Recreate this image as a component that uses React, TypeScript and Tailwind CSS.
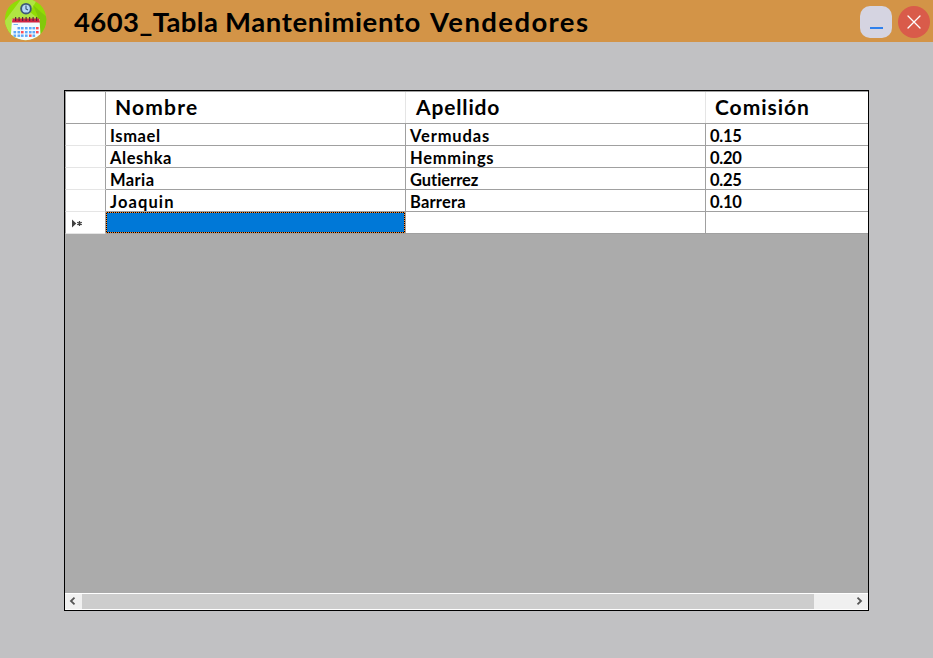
const rows = [
  { first: "Ismael", last: "Vermudas", rate: "0.15", firstCls: "tracking-[0.6px]", lastCls: "tracking-[0.85px]" },
  { first: "Aleshka", last: "Hemmings", rate: "0.20", firstCls: "tracking-[0.55px]", lastCls: "tracking-[0.75px]" },
  { first: "Maria", last: "Gutierrez", rate: "0.25", firstCls: "tracking-[0.4px]", lastCls: "tracking-[-0.05px]" },
  { first: "Joaquin", last: "Barrera", rate: "0.10", firstCls: "tracking-[1.1px]", lastCls: "tracking-[0.2px]" },
];

function CalendarLogo() {
  const cells: [number, number, string][] = [];
  [27, 31, 34.5].forEach((y, r) => {
    [13.5, 17.5, 21, 25, 29, 32.5, 36].forEach((x, c) => {
      if ((r === 0 && c === 0) || (r === 2 && c > 5)) return;
      const red = (r === 0 && c === 6) || (r === 1 && c === 2) || (r === 2 && c === 4) || (r === 1 && c === 6);
      cells.push([x, y, red ? "#ff4b55" : "#5fa9f8"]);
    });
  });
  return (
    <svg width="50" height="42" viewBox="0 0 50 42" className="shrink-0">
      <clipPath id="disc"><circle cx="25.6" cy="19.5" r="20.7" /></clipPath>
      <g clipPath="url(#disc)">
        <rect width="50" height="42" fill="#91dc05" />
        <path d="M4 22 L22 -2 H38 L30 12 L40 20 L38 24 L12 40 Z" fill="#b0e443" />
        <path d="M33 5 L50 20 V40 L39 40 V19 Z" fill="#82c90a" />
        <path d="M12 19 H39.5 L41 42 H10.5 Z" fill="#f4fbff" />
        <path d="M12.5 18.5 H39 L40 22.5 H12 Z" fill="#d02442" />
        <rect x="13.5" y="24" width="4.5" height="1" fill="#78b9f5" />
        {cells.map(([x, y, fill]) => (
          <rect key={`${x}-${y}`} x={x} y={y} width="2.6" height="2.4" fill={fill} />
        ))}
      </g>
      {[15, 18.5, 22, 25.5, 29, 32.5, 36].map((x) => (
        <rect key={x} x={x} y="17" width="1.2" height="4" fill="#5a2540" />
      ))}
      <circle cx="26" cy="8.7" r="5.8" fill="#3d5878" />
      <circle cx="26" cy="8.7" r="3.9" fill="#b5d8f8" />
      <path d="M26 5.5 V9 L28 10" fill="none" stroke="#34506f" strokeWidth="1.1" />
    </svg>
  );
}

function TitleBar() {
  return (
    <header className="flex h-[42px] bg-[#d39447]">
      <CalendarLogo />
      <h1 className="ml-6 flex text-[27.5px] leading-[44px] font-bold whitespace-pre">
        <span className="w-[151px] tracking-[0.4px]">4603_Tabla </span>
        <span className="w-[205px] tracking-[0.6px]">Mantenimiento </span>
        <span className="tracking-[1.4px]">Vendedores</span>
      </h1>
      <div className="mt-[6px] mr-[3px] ml-auto flex gap-[6px]">
        <button className="flex size-8 justify-center rounded-[10px] bg-[#d5d4e1] pt-[21px]">
          <span className="h-[2px] w-[13px] bg-[#2f80ec]" />
        </button>
        <button className="flex size-8 items-center justify-center rounded-full bg-[#d95b4a]">
          <svg width="14" height="14" viewBox="0 0 14 14">
            <path d="M1 1 L13 13 M13 1 L1 13" stroke="#fff" strokeWidth="1.3" strokeLinecap="round" />
          </svg>
        </button>
      </div>
    </header>
  );
}

export default function App() {
  return (
    <div className="h-[658px] w-[933px] overflow-hidden bg-[#c1c1c3] font-['Lato','Open_Sans',sans-serif] text-black">
      <TitleBar />
      <main className="mt-[48px] ml-[64px] flex h-[521px] w-[805px] flex-col border border-black bg-[#ababab]">
        <div className="grid h-[33px] shrink-0 grid-cols-[41px_300px_300px_162px] border-t border-b border-[#a0a0a0] bg-white text-[21px] leading-[30px] font-bold">
          <div className="border-x border-[#a0a0a0]" />
          <div className="border-r border-[#e5e5e5] pl-[9px]"><span className="tracking-[1.2px]">Nombre</span></div>
          <div className="border-r border-[#e5e5e5] pl-[10px]"><span className="tracking-[0.85px]">Apellido</span></div>
          <div className="pl-[9px]"><span className="tracking-[0.95px]">Comisión</span></div>
        </div>
        {rows.map((r) => (
          <div key={r.first} className="grid h-[22px] shrink-0 grid-cols-[41px_300px_300px_162px] bg-white text-[16.5px] leading-[24px] font-bold">
            <div className="border-r border-b border-l border-r-[#a0a0a0] border-b-[#e5e5e5] border-l-[#a0a0a0]" />
            <div className="overflow-hidden border-r border-b border-[#a0a0a0] pl-[4px]"><span className={r.firstCls}>{r.first}</span></div>
            <div className="overflow-hidden border-r border-b border-[#a0a0a0] pl-[4px]"><span className={r.lastCls}>{r.last}</span></div>
            <div className="overflow-hidden border-b border-[#a0a0a0] pl-[4px]"><span className="tracking-[-0.25px]">{r.rate}</span></div>
          </div>
        ))}
        <div className="grid h-[22px] shrink-0 grid-cols-[41px_300px_300px_162px] bg-white">
          <div className="border-r border-b border-l border-r-[#a0a0a0] border-b-[#e5e5e5] border-l-[#a0a0a0] pt-[7px] pl-[6px]">
            <svg width="12" height="9" viewBox="0 0 12 9">
              <path d="M0 0.5 L4.3 4.5 L0 8.5 Z" fill="#404040" />
              <path d="M7.5 2 V7 M5.2 3.2 L9.8 5.8 M9.8 3.2 L5.2 5.8" stroke="#404040" strokeWidth="1.3" />
            </svg>
          </div>
          <div className="border-r border-b border-[#a0a0a0]">
            <div className="h-full bg-[repeating-conic-gradient(#000_0_25%,#ff8728_0_50%)] bg-[length:2px_2px] p-px">
              <div className="h-full bg-[#0078d7]" />
            </div>
          </div>
          <div className="border-r border-b border-[#a0a0a0]" />
          <div className="border-b border-[#a0a0a0]" />
        </div>
        <div className="mt-auto flex h-[17px] border-y border-white bg-[#f0f0f0]">
          <div className="flex w-[17px] pt-[3px] pl-[4px]">
            <svg width="7" height="8" viewBox="0 0 7 8"><path d="M5.5 0.7 L2 4 L5.5 7.3" fill="none" stroke="#555" strokeWidth="1.8" /></svg>
          </div>
          <div className="w-[732px] bg-[#cdcdcd]" />
          <div className="mr-[5px] ml-auto flex pt-[3px]">
            <svg width="7" height="8" viewBox="0 0 7 8"><path d="M1.5 0.7 L5 4 L1.5 7.3" fill="none" stroke="#555" strokeWidth="1.8" /></svg>
          </div>
        </div>
      </main>
    </div>
  );
}
